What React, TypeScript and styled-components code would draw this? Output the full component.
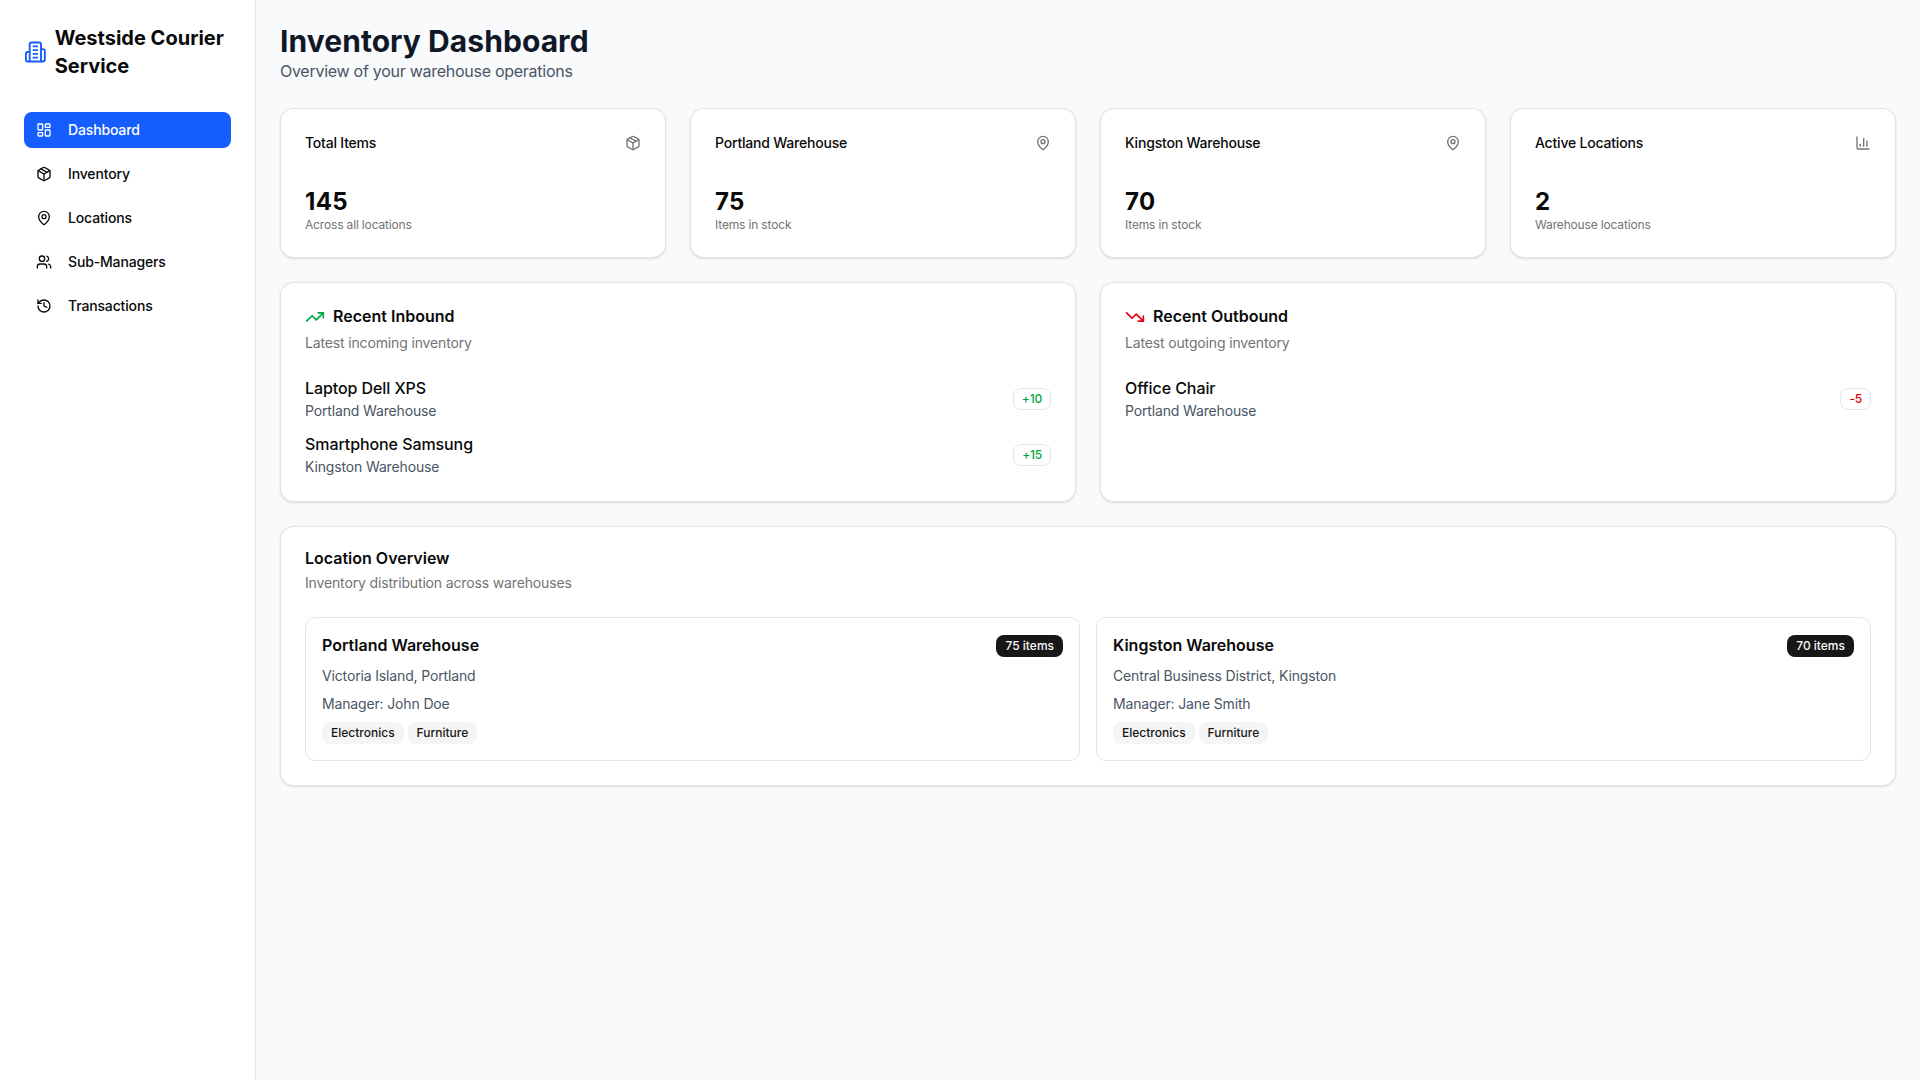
import styled, { createGlobalStyle } from 'styled-components';
import {
  BarChart3,
  History,
  LayoutDashboard,
  MapPin,
  Package,
  TrendingDown,
  TrendingUp,
  Users,
} from 'lucide-react';

const GlobalStyle = createGlobalStyle`
  * {
    box-sizing: border-box;
  }

  body {
    margin: 0;
    background: #f9fafb;
    color: #0a0a0a;
    font-family: Inter, "Liberation Sans", sans-serif;
    font-size: 16px;
    line-height: 24px;
  }
`;

const Shell = styled.div`
  display: flex;
  min-height: 100vh;
`;

const Sidebar = styled.aside`
  width: 256px;
  flex-shrink: 0;
  padding: 24px;
  background: #ffffff;
  border-right: 1px solid #e5e7eb;
`;

const Brand = styled.div`
  display: flex;
  align-items: center;
  gap: 8px;
  margin-bottom: 32px;
  color: #155dfc;
`;

const BrandName = styled.h2`
  margin: 0;
  color: #0a0a0a;
  font-size: 20px;
  line-height: 28px;
  font-weight: 700;
`;

const Nav = styled.nav`
  display: flex;
  flex-direction: column;
  gap: 8px;
`;

const NavItem = styled.a<{ $active?: boolean }>`
  display: flex;
  align-items: center;
  gap: 16px;
  height: 36px;
  padding: 0 12px;
  border-radius: 8px;
  font-size: 14px;
  line-height: 20px;
  font-weight: 500;
  letter-spacing: -0.15px;
  background: ${(props) => (props.$active ? '#155dfc' : 'transparent')};
  color: ${(props) => (props.$active ? '#ffffff' : '#0a0a0a')};
`;

const Main = styled.main`
  flex: 1;
  min-width: 0;
  padding: 24px;
`;

const PageHeader = styled.header`
  margin-bottom: 24px;
`;

const PageTitle = styled.h1`
  margin: 0;
  padding-bottom: 2px;
  color: #101828;
  font-size: 30px;
  line-height: 34px;
  font-weight: 700;
  letter-spacing: 0.06px;
`;

const PageSubtitle = styled.p`
  margin: 0;
  padding-bottom: 2px;
  color: #4a5565;
  font-size: 16px;
  line-height: 22px;
  letter-spacing: -0.27px;
`;

const Grid = styled.div<{ $cols: number }>`
  display: grid;
  grid-template-columns: repeat(${(props) => props.$cols}, minmax(0, 1fr));
  gap: 24px;
  margin-bottom: 24px;
`;

const Card = styled.section`
  display: flex;
  flex-direction: column;
  gap: 24px;
  padding: 24px;
  background: #ffffff;
  border: 1px solid rgba(0, 0, 0, 0.1);
  border-radius: 14px;
  box-shadow: 0 1px 3px rgba(0, 0, 0, 0.1), 0 1px 2px -1px rgba(0, 0, 0, 0.1);
`;

const StatHeader = styled.div`
  display: flex;
  align-items: center;
  justify-content: space-between;
  padding-bottom: 8px;
  color: #737373;
`;

const StatLabel = styled.span`
  color: #0a0a0a;
  font-size: 14px;
  line-height: 20px;
  font-weight: 500;
  letter-spacing: -0.2px;
`;

const StatValue = styled.div`
  margin-bottom: -2px;
  font-size: 24px;
  line-height: 34px;
  font-weight: 700;
  letter-spacing: 0.3px;
`;

const StatNote = styled.p`
  margin: 0;
  color: #737373;
  font-size: 12px;
  line-height: 16px;
  letter-spacing: -0.16px;
`;

const CardHead = styled.div`
  display: flex;
  flex-direction: column;
  gap: 6px;
`;

const CardTitle = styled.h4`
  display: flex;
  align-items: center;
  gap: 8px;
  min-height: 16px;
  margin: 0;
  font-size: 16px;
  line-height: 16px;
  font-weight: 600;
`;

const CardTitleText = styled.span`
  margin-top: -2px;
`;

const CardSubtitle = styled.p`
  margin: 0;
  color: #737373;
  font-size: 14px;
  line-height: 20px;
  letter-spacing: -0.15px;
`;

const Moves = styled.div`
  display: flex;
  flex-direction: column;
  gap: 12px;
`;

const MoveRow = styled.div`
  display: flex;
  align-items: center;
  justify-content: space-between;
`;

const MoveName = styled.p`
  margin: 0;
  padding-bottom: 2px;
  font-size: 16px;
  line-height: 22px;
  font-weight: 500;
  letter-spacing: -0.08px;
`;

const Muted = styled.p<{ $gap?: number }>`
  margin: 0 0 ${(props) => props.$gap ?? 0}px;
  color: #4a5565;
  font-size: 14px;
  line-height: 20px;
  letter-spacing: -0.15px;
`;

const Qty = styled.span<{ $color: string }>`
  padding: 2px 8px;
  border: 1px solid rgba(0, 0, 0, 0.1);
  border-radius: 8px;
  color: ${(props) => props.$color};
  font-size: 12px;
  line-height: 16px;
  font-weight: 500;
  letter-spacing: -0.2px;
`;

const Locations = styled.div`
  display: grid;
  grid-template-columns: repeat(2, minmax(0, 1fr));
  gap: 16px;
`;

const LocationCard = styled.div`
  padding: 16px;
  border: 1px solid rgba(0, 0, 0, 0.1);
  border-radius: 10px;
`;

const LocationTop = styled.div`
  display: flex;
  align-items: center;
  justify-content: space-between;
  margin-bottom: 8px;
`;

const LocationName = styled.h4`
  margin: 0;
  padding-bottom: 2px;
  font-size: 16px;
  line-height: 22px;
  font-weight: 600;
`;

const CountBadge = styled.span`
  padding: 3px 9px;
  border-radius: 8px;
  background: #171717;
  color: #fafafa;
  font-size: 12px;
  line-height: 16px;
  font-weight: 500;
`;

const Tags = styled.div`
  display: flex;
  gap: 4px;
`;

const Tag = styled.span`
  padding: 3px 9px;
  border-radius: 8px;
  background: #f5f5f5;
  color: #171717;
  font-size: 12px;
  line-height: 16px;
  font-weight: 500;
`;

const BrandIcon = () => (
  <svg
    width="22.7"
    height="24"
    viewBox="0 0 24 24"
    fill="none"
    stroke="currentColor"
    strokeWidth="2"
    strokeLinecap="round"
    strokeLinejoin="round"
    style={{ flexShrink: 0 }}
  >
    <path d="M6 22V4a2 2 0 0 1 2-2h8a2 2 0 0 1 2 2v18Z" />
    <path d="M6 12H4a2 2 0 0 0-2 2v6a2 2 0 0 0 2 2h2" />
    <path d="M18 9h2a2 2 0 0 1 2 2v9a2 2 0 0 1-2 2h-2" />
    <path d="M10 6h4" />
    <path d="M10 10h4" />
    <path d="M10 14h4" />
    <path d="M10 18h4" />
  </svg>
);

const navItems = [
  { label: 'Dashboard', icon: LayoutDashboard, active: true },
  { label: 'Inventory', icon: Package },
  { label: 'Locations', icon: MapPin },
  { label: 'Sub-Managers', icon: Users },
  { label: 'Transactions', icon: History },
];

const stats = [
  { label: 'Total Items', icon: Package, value: '145', note: 'Across all locations' },
  { label: 'Portland Warehouse', icon: MapPin, value: '75', note: 'Items in stock' },
  { label: 'Kingston Warehouse', icon: MapPin, value: '70', note: 'Items in stock' },
  { label: 'Active Locations', icon: BarChart3, value: '2', note: 'Warehouse locations' },
];

const inbound = [
  { name: 'Laptop Dell XPS', place: 'Portland Warehouse', qty: '+10' },
  { name: 'Smartphone Samsung', place: 'Kingston Warehouse', qty: '+15' },
];

const outbound = [{ name: 'Office Chair', place: 'Portland Warehouse', qty: '-5' }];

const locations = [
  {
    name: 'Portland Warehouse',
    count: '75 items',
    address: 'Victoria Island, Portland',
    manager: 'John Doe',
  },
  {
    name: 'Kingston Warehouse',
    count: '70 items',
    address: 'Central Business District, Kingston',
    manager: 'Jane Smith',
  },
];

function MoveList({ rows, color }: { rows: typeof inbound; color: string }) {
  return (
    <Moves>
      {rows.map((row) => (
        <MoveRow key={row.name}>
          <div>
            <MoveName>{row.name}</MoveName>
            <Muted>{row.place}</Muted>
          </div>
          <Qty $color={color}>{row.qty}</Qty>
        </MoveRow>
      ))}
    </Moves>
  );
}

export default function App() {
  return (
    <Shell>
      <GlobalStyle />
      <Sidebar>
        <Brand>
          <BrandIcon />
          <BrandName>Westside Courier Service</BrandName>
        </Brand>
        <Nav>
          {navItems.map((item) => (
            <NavItem key={item.label} $active={item.active}>
              <item.icon size={16} />
              {item.label}
            </NavItem>
          ))}
        </Nav>
      </Sidebar>
      <Main>
        <PageHeader>
          <PageTitle>Inventory Dashboard</PageTitle>
          <PageSubtitle>Overview of your warehouse operations</PageSubtitle>
        </PageHeader>

        <Grid $cols={4}>
          {stats.map((stat) => (
            <Card key={stat.label}>
              <StatHeader>
                <StatLabel>{stat.label}</StatLabel>
                <stat.icon size={16} />
              </StatHeader>
              <div>
                <StatValue>{stat.value}</StatValue>
                <StatNote>{stat.note}</StatNote>
              </div>
            </Card>
          ))}
        </Grid>

        <Grid $cols={2}>
          <Card>
            <CardHead>
              <CardTitle>
                <TrendingUp size={20} color="#00a63e" />
                <CardTitleText>Recent Inbound</CardTitleText>
              </CardTitle>
              <CardSubtitle>Latest incoming inventory</CardSubtitle>
            </CardHead>
            <MoveList rows={inbound} color="#00a63e" />
          </Card>
          <Card>
            <CardHead>
              <CardTitle>
                <TrendingDown size={20} color="#e7000b" />
                <CardTitleText>Recent Outbound</CardTitleText>
              </CardTitle>
              <CardSubtitle>Latest outgoing inventory</CardSubtitle>
            </CardHead>
            <MoveList rows={outbound} color="#e7000b" />
          </Card>
        </Grid>

        <Card>
          <CardHead>
            <CardTitle>
              <CardTitleText>Location Overview</CardTitleText>
            </CardTitle>
            <CardSubtitle>Inventory distribution across warehouses</CardSubtitle>
          </CardHead>
          <Locations>
            {locations.map((loc) => (
              <LocationCard key={loc.name}>
                <LocationTop>
                  <LocationName>{loc.name}</LocationName>
                  <CountBadge>{loc.count}</CountBadge>
                </LocationTop>
                <Muted $gap={8}>{loc.address}</Muted>
                <Muted $gap={8}>Manager: {loc.manager}</Muted>
                <Tags>
                  <Tag>Electronics</Tag>
                  <Tag>Furniture</Tag>
                </Tags>
              </LocationCard>
            ))}
          </Locations>
        </Card>
      </Main>
    </Shell>
  );
}
